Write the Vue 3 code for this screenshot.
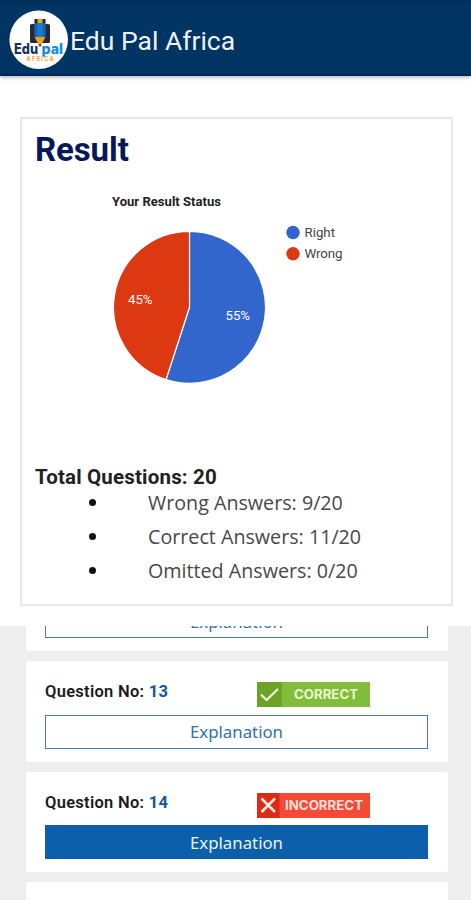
<template>
  <div class="app-page">
    <!-- 顶部栏 -->
    <header class="app-header">
      <svg class="logo" viewBox="0 0 60 60">
        <circle cx="29.7" cy="29.7" r="29.3" fill="#fff" />
        <rect x="21" y="14" width="20" height="19" rx="1.5" fill="#252b35" />
        <rect x="25.5" y="9" width="11" height="5" fill="#222832" />
        <rect x="28.5" y="9" width="5" height="5" fill="#f5a01d" />
        <path d="M25.5 13H36.5V28H25.5Z" fill="#1268b8" />
        <path d="M28.5 13H33.5V28H28.5Z" fill="#1b7acb" />
        <path d="M25.5 27L31 37L36.5 27Z" fill="#f5a01d" />
        <path d="M29.5 34.5L31 37L32.5 34.5Z" fill="#222832" />
        <text class="logo-text" x="5" y="44" textLength="24" lengthAdjust="spacingAndGlyphs" fill="#14345c">Edu</text>
        <text class="logo-text" x="32.5" y="44" textLength="21.5" lengthAdjust="spacingAndGlyphs" fill="#1388ed">pal</text>
        <text class="logo-sub" x="17.5" y="51" textLength="27" fill="#f0a22d">AFRICA</text>
      </svg>
      <h1>Edu Pal Africa</h1>
    </header>

    <!-- 结果卡片 -->
    <section class="result-area">
      <div class="result-card">
        <h2>Result</h2>
        <svg class="chart" viewBox="0 0 400 260">
          <text class="chart-title" x="77" y="35.5" textLength="109">Your Result Status</text>
          <path :d="rightSlice" fill="#3366cc" stroke="#fff" stroke-width="1.2" />
          <path :d="wrongSlice" fill="#dc3912" stroke="#fff" stroke-width="1.2" />
          <text class="chart-label" x="190.5" y="150" textLength="24.5" lengthAdjust="spacingAndGlyphs">55%</text>
          <text class="chart-label" x="93" y="134.3" textLength="24.5" lengthAdjust="spacingAndGlyphs">45%</text>
          <circle cx="258" cy="62.5" r="6.7" fill="#3366cc" />
          <text class="legend-text" x="269.5" y="67.3" textLength="30.5">Right</text>
          <circle cx="258" cy="83.7" r="6.7" fill="#dc3912" />
          <text class="legend-text" x="269.5" y="88.3" textLength="38">Wrong</text>
        </svg>
        <h3>Total Questions: 20</h3>
        <ul class="answer-list">
          <li v-for="item in answers" :key="item.label">
            <span class="dot"></span>
            <span>{{ item.label }} Answers: {{ item.count }}/20</span>
          </li>
        </ul>
      </div>
    </section>

    <!-- 题目列表 -->
    <section class="question-list">
      <article v-for="q in questions" :key="q.no" class="question-card">
        <div class="question-row">
          <p>Question No: <b>{{ q.no }}</b></p>
          <svg v-if="q.correct" class="badge" viewBox="0 0 113 25">
            <rect width="113" height="25" fill="#82bc3c" />
            <rect width="25" height="25" fill="#6aa326" />
            <path d="M4 12.5L9.5 18L21 7" fill="none" stroke="#f2ffe4" stroke-width="2.2" />
            <text class="badge-text" x="37" y="17.4" textLength="64" lengthAdjust="spacingAndGlyphs" fill="#e8f8d2">CORRECT</text>
          </svg>
          <svg v-else class="badge" viewBox="0 0 113 25">
            <rect width="113" height="25" fill="#f44a36" />
            <rect width="22.5" height="25" fill="#dc2c16" />
            <path d="M4.5 5.5L18 19M18 5.5L4.5 19" fill="none" stroke="#ffe9e4" stroke-width="2.6" />
            <text class="badge-text" x="28" y="17.4" textLength="78" lengthAdjust="spacingAndGlyphs" fill="#ffe0da">INCORRECT</text>
          </svg>
        </div>
        <button :class="['explain-button', { active: q.open }]" @click="q.open = !q.open">Explanation</button>
      </article>
    </section>
  </div>
</template>

<script setup>
import { ref } from 'vue';

const answers = [
  { label: 'Wrong', count: 9 },
  { label: 'Correct', count: 11 },
  { label: 'Omitted', count: 0 }
];

const questions = ref([
  { no: 12, correct: true, open: false },
  { no: 13, correct: true, open: false },
  { no: 14, correct: false, open: true },
  { no: 15, correct: true, open: false }
]);

// 饼图扇形路径
function slice(from, to) {
  const cx = 154.5;
  const cy = 137.3;
  const r = 76;
  const point = (t) => {
    const a = t * Math.PI * 2;
    return `${cx + r * Math.sin(a)} ${cy - r * Math.cos(a)}`;
  };
  const large = to - from > 0.5 ? 1 : 0;
  return `M${cx} ${cy}L${point(from)}A${r} ${r} 0 ${large} 1 ${point(to)}Z`;
}

const rightSlice = slice(0, 0.55);
const wrongSlice = slice(0.55, 1);
</script>

<style>
body {
  margin: 0;
}
</style>

<style scoped>
.app-page {
  display: flex;
  flex-direction: column;
  height: 900px;
  overflow: hidden;
  background: #fff;
  font-family: Roboto, "Liberation Sans", sans-serif;
}

h1,
h2,
h3,
p,
ul {
  margin: 0;
  padding: 0;
}

/* 顶部栏 */
.app-header {
  flex: none;
  box-sizing: border-box;
  height: 76px;
  padding: 4px 0 0 9px;
  display: flex;
  align-items: center;
  background: linear-gradient(#022b50, #003463 4px, #003463 73px, #00205c 76px);
  box-shadow: 0 1px 4px rgba(0, 0, 0, 0.35);
}

.logo {
  width: 60px;
  height: 60px;
}

.app-header h1 {
  margin-left: 1px;
  padding-top: 1px;
  font-size: 26.5px;
  font-weight: 400;
  color: #eef3fa;
}

.logo-text {
  font-family: Inter, sans-serif;
  font-size: 14px;
  font-weight: 800;
}

.logo-sub {
  font-family: Inter, sans-serif;
  font-size: 5.5px;
  font-weight: 700;
}

/* 结果卡片 */
.result-area {
  flex: none;
  height: 550px;
  box-sizing: border-box;
  padding: 41px 18px 0 20px;
}

.result-card {
  box-sizing: border-box;
  height: 489px;
  padding: 10px 13px 0;
  border: 2px solid #e9e9e9;
}

.result-card h2 {
  font-size: 33px;
  line-height: 41px;
  font-weight: 700;
  letter-spacing: -0.1px;
  color: #06175a;
}

.chart {
  display: block;
  width: 400px;
  height: 260px;
}

.chart-title {
  font-size: 13px;
  font-weight: 700;
  fill: #222;
}

.chart-label {
  font-size: 13.5px;
  fill: #fff;
}

.legend-text {
  font-size: 13.3px;
  fill: #444;
}

.result-card h3 {
  margin-top: 34px;
  font-size: 20.5px;
  line-height: 27px;
  font-weight: 700;
  letter-spacing: 0.18px;
  color: #222;
}

.answer-list {
  list-style: none;
}

.answer-list li {
  display: flex;
  align-items: center;
  height: 34px;
  padding-left: 54px;
  font-family: "Open Sans", "Noto Sans", sans-serif;
  font-size: 19.7px;
  color: #484848;
}

.answer-list li:first-child {
  margin-top: -6px;
}

.dot {
  width: 7px;
  height: 7px;
  margin-right: 52px;
  border-radius: 50%;
  background: #111;
}

/* 题目列表 */
.question-list {
  flex: 1;
  min-height: 0;
  overflow: hidden;
  padding: 0 23px 0 26px;
  background: #eee;
}

.question-card {
  box-sizing: border-box;
  height: 100.6px;
  margin-bottom: 10px;
  padding: 16px 20px 0 19px;
  border-radius: 2px;
  background: #fff;
}

.question-card:first-child {
  margin-top: -75.6px;
}

.question-row {
  display: flex;
  justify-content: space-between;
  height: 37.7px;
  padding-right: 58px;
}

.question-row p {
  padding-top: 1px;
  font-size: 16.5px;
  line-height: 28px;
  font-weight: 600;
  letter-spacing: 0.28px;
  color: #1a1a1a;
}

.question-row b {
  font-weight: 700;
  color: #14579f;
}

.badge {
  width: 113px;
  height: 25px;
  margin-top: 5px;
}

.badge-text {
  font-family: Inter, sans-serif;
  font-size: 12.5px;
  font-weight: 700;
}

.explain-button {
  display: block;
  box-sizing: border-box;
  width: 100%;
  height: 34px;
  padding: 0;
  border: 1.5px solid #4478b8;
  border-radius: 0;
  background: #fff;
  font-family: "Noto Sans", "Open Sans", sans-serif;
  font-size: 16.8px;
  color: #3270b3;
  cursor: pointer;
}

.explain-button.active {
  border-color: #0b5fab;
  background: #0b5fab;
  color: #eaf3ff;
}
</style>
